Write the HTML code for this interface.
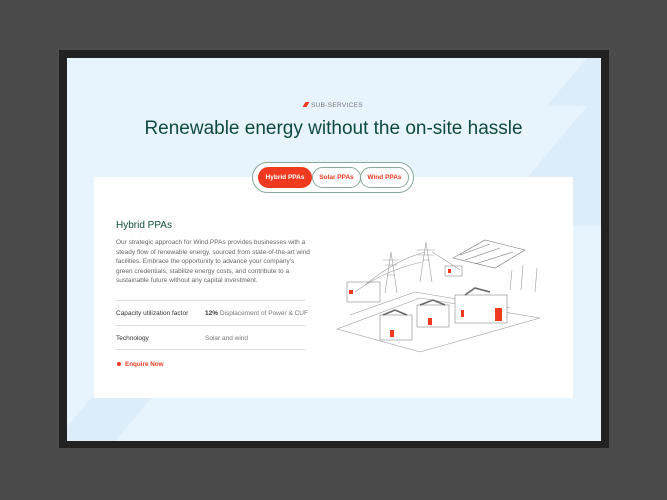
<!DOCTYPE html>
<html><head><meta charset="utf-8"><style>
*{margin:0;padding:0;box-sizing:border-box}
body{width:667px;height:500px;background:#4b4b4b;font-family:"Liberation Sans",sans-serif;position:relative;overflow:hidden}
.frame{position:absolute;left:59px;top:50px;width:550px;height:398px;background:#222}
.inner{position:absolute;left:67px;top:58px;width:534px;height:383px;background:#e7f3fd;overflow:hidden}
.sh{position:absolute;background:#dcecf9}
.card{position:absolute;left:94px;top:177px;width:479px;height:221px;background:#fff}
.tag{position:absolute;top:102px;left:0;width:667px;text-align:center;font-size:6.5px;color:#777;letter-spacing:.3px}
.tag i{display:inline-block;width:4px;height:5px;background:#f03a1f;transform:skewX(-30deg);margin-right:3px}
h1{position:absolute;top:118px;left:0;width:667px;text-align:center;font-size:19px;font-weight:normal;color:#0f4a3a}
.pill{position:absolute;left:252px;top:162px;width:162px;height:31px;border:1px solid #8aa89c;border-radius:16px;background:#fff}
.t{position:absolute;top:167px;height:21px;border:1px solid #8aa89c;border-radius:11px;font-size:6.5px;font-weight:bold;color:#f03a1f;text-align:center;line-height:19px;background:#fff}
.t.a{background:#f03a1f;color:#fff;border-color:#f03a1f}
h2{position:absolute;left:116px;top:220px;font-size:10px;font-weight:normal;color:#0f4a3a}
p{position:absolute;left:116px;top:238px;width:194px;font-size:6.5px;line-height:9.5px;color:#666}
.row{position:absolute;left:116px;width:189px;border-top:1px solid #ddd;font-size:6.5px;color:#333;white-space:nowrap}
.row span{position:absolute;left:89px;color:#777;white-space:nowrap}
.row b{color:#333}
.en{position:absolute;left:117px;top:361px;font-size:6.3px;color:#f03a1f;font-weight:bold}
.en:before{content:"";display:inline-block;width:4px;height:4px;border-radius:2px;background:#f03a1f;margin-right:4px}
</style></head><body>
<div class="frame"></div>
<div class="inner">
<div class="sh" style="left:500px;top:0;width:80px;height:48px;transform:skewX(-40deg)"></div>
<div class="sh" style="left:470px;top:48px;width:120px;height:120px;transform:skewX(-40deg)"></div>
<div class="sh" style="left:20px;top:300px;width:60px;height:90px;transform:skewX(-40deg)"></div>
</div>
<div class="card"></div>
<div class="tag"><i></i>SUB-SERVICES</div>
<h1>Renewable energy without the on-site hassle</h1>
<div class="pill"></div>
<div class="t a" style="left:258px;width:54px">Hybrid PPAs</div>
<div class="t" style="left:312px;width:49px">Solar PPAs</div>
<div class="t" style="left:360px;width:49px">Wind PPAs</div>
<h2>Hybrid PPAs</h2>
<p>Our strategic approach for Wind PPAs provides businesses with a steady flow of renewable energy, sourced from state-of-the-art wind facilities. Embrace the opportunity to advance your company's green credentials, stabilize energy costs, and contribute to a sustainable future without any capital investment.</p>
<div class="row" style="top:300px;height:25px;line-height:25px">Capacity utilization factor<span><b>12%</b> Displacement of Power &amp; CUF</span></div>
<div class="row" style="top:325px;height:25px;line-height:25px;border-bottom:1px solid #ddd">Technology<span>Solar and wind</span></div>
<div class="en">Enquire Now</div>
<svg style="position:absolute;left:325px;top:230px" width="230" height="130" viewBox="0 0 230 130" fill="none" stroke="#999" stroke-width=".6">
<path d="M12 99 L95 68 L215 88 L95 122 Z"/>
<path d="M25 85 L90 62 L185 78"/>
<path d="M60 63 L66 22 L72 63 M62 45 L70 45 M58 30 L74 30 M60 35 L72 35"/>
<path d="M95 52 L101 12 L107 52 M97 30 L105 30 M92 20 L110 20 M93 25 L109 25"/>
<path d="M40 55 Q70 30 100 22 M30 62 Q60 40 97 32 M107 22 Q120 30 135 40"/>
<g stroke="#777"><path d="M128 28 L160 10 L200 20 L170 38 Z M135 25 L165 14 M140 30 L175 18 M150 34 L188 22"/></g>
<path d="M185 60 L187 40 M196 60 L198 35 M210 62 L212 38"/>
<rect x="22" y="52" width="33" height="20" stroke="#888"/><rect x="24" y="60" width="4" height="4" fill="#f03a1f" stroke="none"/>
<rect x="120" y="36" width="17" height="10" stroke="#888"/><rect x="123" y="39" width="3" height="4" fill="#f03a1f" stroke="none"/>
<rect x="55" y="85" width="32" height="25" fill="#fff" stroke="#888"/><rect x="65" y="100" width="4" height="7" fill="#f03a1f" stroke="none"/>
<rect x="92" y="75" width="32" height="22" fill="#fff" stroke="#888"/><rect x="103" y="88" width="4" height="7" fill="#f03a1f" stroke="none"/>
<rect x="130" y="65" width="52" height="28" fill="#fff" stroke="#888"/><rect x="170" y="78" width="7" height="13" fill="#f03a1f" stroke="none"/><rect x="136" y="80" width="3" height="7" fill="#f03a1f" stroke="none"/>
<path d="M58 85 L70 80 L82 85 M95 75 L108 70 L120 75 M140 65 L150 58 L165 62" stroke="#666" stroke-width="1.5"/>
</svg>
</body></html>
